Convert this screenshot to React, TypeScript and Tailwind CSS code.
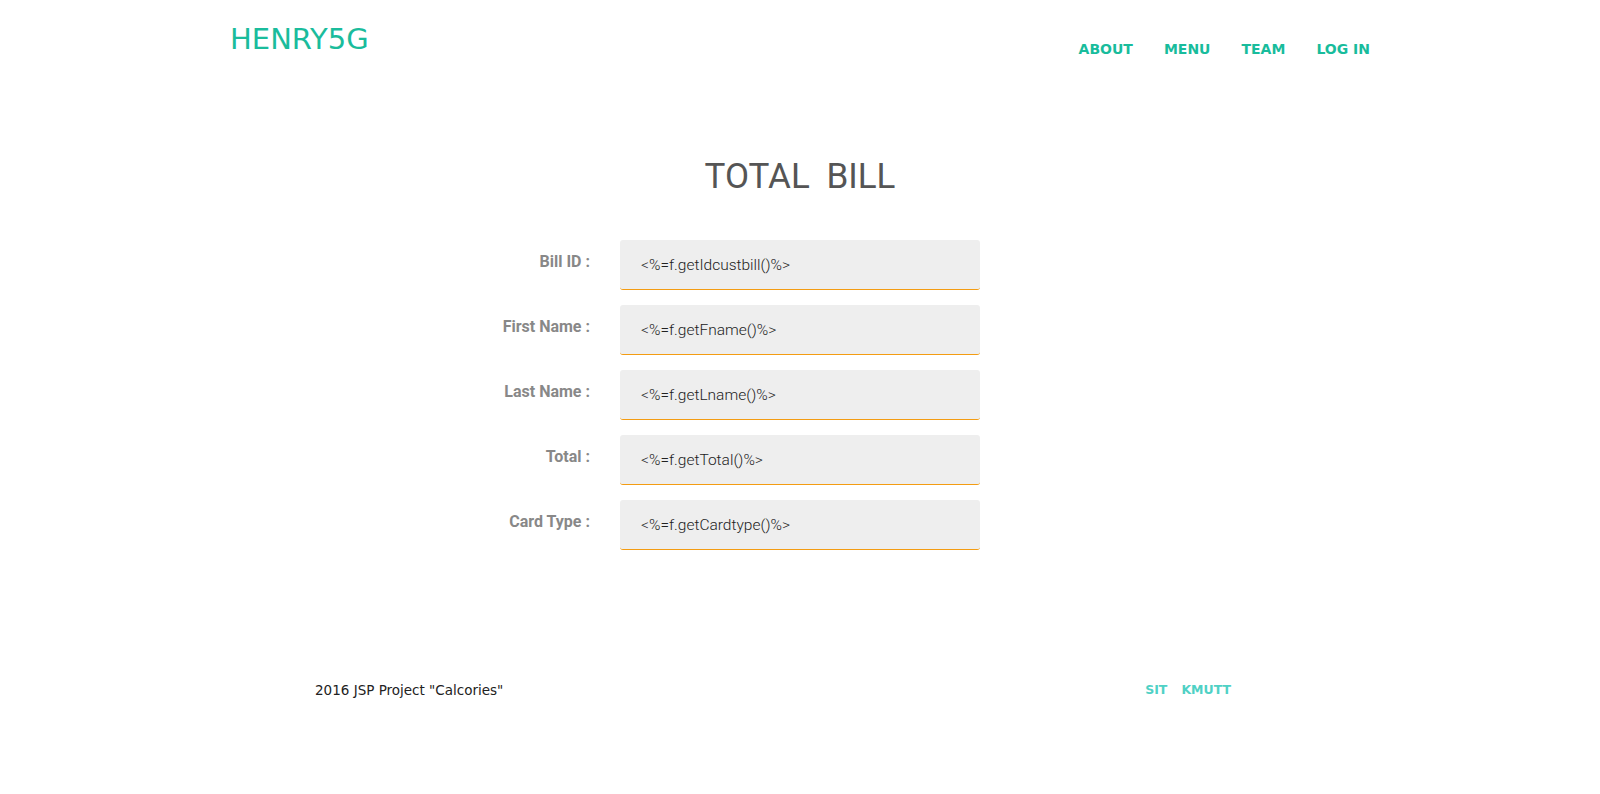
import React from "react";

const fields = [
  { label: "Bill ID :", value: "<%=f.getIdcustbill()%>" },
  { label: "First Name :", value: "<%=f.getFname()%>" },
  { label: "Last Name :", value: "<%=f.getLname()%>" },
  { label: "Total :", value: "<%=f.getTotal()%>" },
  { label: "Card Type :", value: "<%=f.getCardtype()%>" },
];

export default function App() {
  return (
    <div className="min-h-[794px] w-full bg-white font-['Roboto',sans-serif]">
      <header className="mx-auto flex w-[1170px] justify-between px-[15px] font-['DejaVu_Sans',sans-serif]">
        <a className="pt-[25px] text-[29px] leading-[29px] text-[#1abc9c]">HENRY5G</a>
        <nav className="flex gap-[31px] pt-[42px] text-[14px] leading-[14px] font-bold text-[#18bc9c]">
          <a>ABOUT</a>
          <a>MENU</a>
          <a>TEAM</a>
          <a>LOG IN</a>
        </nav>
      </header>

      <main className="mx-auto w-[1170px]">
        <h1 className="mt-[103px] text-center text-[35px] leading-[35px] font-normal text-[#555] [word-spacing:8px]">
          TOTAL BILL
        </h1>
        <form className="mt-[46px] flex flex-col gap-[15px] pl-[215px]">
          {fields.map((f) => (
            <div key={f.label} className="flex gap-[30px]">
              <label className="w-[160px] pt-[12px] text-right text-[16px] leading-[20px] font-bold text-[#888]">
                {f.label}
              </label>
              <input
                readOnly
                value={f.value}
                className="h-[50px] w-[360px] rounded-[3px] border-b border-[#f39c12] bg-[#eee] pl-[21px] text-[15.5px] font-light text-[#222] outline-none"
              />
            </div>
          ))}
        </form>
      </main>

      <footer className="mx-auto mt-[133px] flex w-[970px] justify-between pr-[54px] font-['DejaVu_Sans',sans-serif] text-[13.5px] leading-[14px]">
        <span className="text-[#222]">2016 JSP Project "Calcories"</span>
        <div className="flex gap-[14px] text-[12.5px] font-bold text-[#4fd1c5]">
          <a>SIT</a>
          <a>KMUTT</a>
        </div>
      </footer>
    </div>
  );
}
